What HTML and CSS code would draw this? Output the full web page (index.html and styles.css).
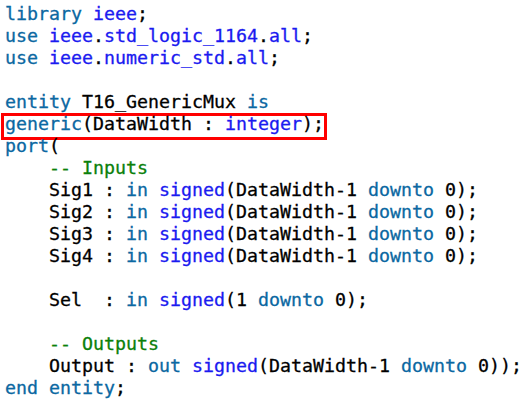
FILE: index.html
```html
<!DOCTYPE html>
<html>
<head>
<meta charset="utf-8">
<link rel="stylesheet" href="styles.css">
</head>
<body>
<div class="code">
<div class="ln"><span class="kw">library</span> <span class="ty">ieee</span>;</div>
<div class="ln"><span class="kw">use</span> <span class="ty">ieee</span>.<span class="ty">std_logic_1164</span>.<span class="ty">all</span>;</div>
<div class="ln"><span class="kw">use</span> <span class="ty">ieee</span>.<span class="ty">numeric_std</span>.<span class="ty">all</span>;</div>
<div class="ln"></div>
<div class="ln"><span class="kw">entity</span> T16_GenericMux <span class="kw">is</span></div>
<div class="ln"><span class="hl"><span class="kw">generic</span>(DataWidth : <span class="ty">integer</span>);</span></div>
<div class="ln"><span class="kw">port</span>(</div>
<div class="ln">    <span class="cm">-- Inputs</span></div>
<div class="ln">    Sig1 : <span class="kw">in</span> <span class="ty">signed</span>(DataWidth-1 <span class="kw">downto</span> 0);</div>
<div class="ln">    Sig2 : <span class="kw">in</span> <span class="ty">signed</span>(DataWidth-1 <span class="kw">downto</span> 0);</div>
<div class="ln">    Sig3 : <span class="kw">in</span> <span class="ty">signed</span>(DataWidth-1 <span class="kw">downto</span> 0);</div>
<div class="ln">    Sig4 : <span class="kw">in</span> <span class="ty">signed</span>(DataWidth-1 <span class="kw">downto</span> 0);</div>
<div class="ln"></div>
<div class="ln">    Sel  : <span class="kw">in</span> <span class="ty">signed</span>(1 <span class="kw">downto</span> 0);</div>
<div class="ln"></div>
<div class="ln">    <span class="cm">-- Outputs</span></div>
<div class="ln">    Output : <span class="kw">out</span> <span class="ty">signed</span>(DataWidth-1 <span class="kw">downto</span> 0));</div>
<div class="ln"><span class="kw">end</span> <span class="kw">entity</span>;</div>
</div>
</body>
</html>
```
FILE: styles.css
```css
html, body {
  margin: 0;
  padding: 0;
  background: #ffffff;
}
.code {
  padding: 3px 0 0 5px;
  font-family: "DejaVu Sans Mono", "Liberation Mono", monospace;
  font-size: 18.27px;
  color: #000000;
  -webkit-text-stroke: 0.3px currentColor;
}
.ln {
  height: 22px;
  line-height: 22px;
  white-space: pre;
}
.kw { color: #0b68a2; }
.ty { color: #1a1af0; }
.cm { color: #0a800a; }
.hl {
  display: inline-block;
  line-height: 16px;
  border: 3px solid #ff0000;
  padding: 0 0 5px 1px;
  margin-left: -4px;
}
```
